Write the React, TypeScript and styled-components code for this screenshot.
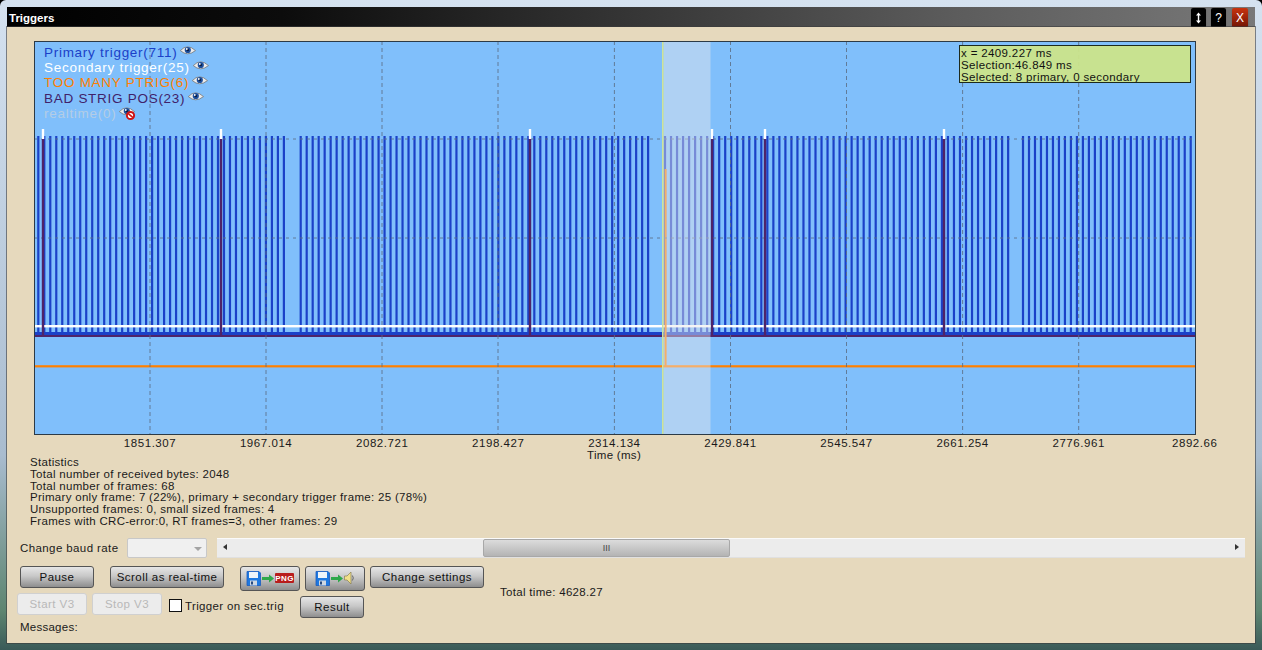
import React from 'react';
import styled, { createGlobalStyle } from 'styled-components';

const GRID_X = [150, 266, 382, 498, 614.4, 730.5, 846.5, 962.6, 1078.7];
const TICKS = ['1851.307', '1967.014', '2082.721', '2198.427', '2314.134', '2429.841', '2545.547', '2661.254', '2776.961', '2892.66'];
const MARKERS = [43, 221, 530, 712, 765, 944];

const makeBars = (start: number, count: number, step: number) =>
  Array.from({ length: count }, (_, i) => start + i * step);

const BARS = [
  ...makeBars(38.3, 42, 5.99),
  ...makeBars(300.7, 59, 5.99),
  ...makeBars(665, 58, 6.02),
  ...makeBars(1023, 29, 5.99),
];

const STATS = [
  'Statistics',
  'Total number of received bytes: 2048',
  'Total number of frames: 68',
  'Primary only frame: 7 (22%), primary + secondary trigger frame: 25 (78%)',
  'Unsupported frames: 0, small sized frames: 4',
  'Frames with CRC-error:0, RT frames=3, other frames: 29',
];

const LEGEND = [
  { label: 'Primary trigger(711)', color: '#1b41c8' },
  { label: 'Secondary trigger(25)', color: '#ffffff' },
  { label: 'TOO MANY PTRIG(6)', color: '#ff8000' },
  { label: 'BAD STRIG POS(23)', color: '#40226a' },
  { label: 'realtime(0)', color: '#b4cde6', off: true },
];

const Eye = ({ off }: { off?: boolean }) => (
  <EyeIcon width="16" height="12" viewBox="0 0 16 12">
    <path d="M0.3 4.6 Q7.5 -3 15.5 4.6 Q7.5 11 0.3 4.6Z" fill="#ececec" stroke="#777" strokeWidth="0.8" />
    <circle cx="7.8" cy="4" r="3.1" fill="#1d4f9c" />
    <circle cx="7.8" cy="4" r="1.2" fill="#0a1c40" />
    <circle cx="6.8" cy="3" r="0.9" fill="#fff" />
    {off && (
      <g>
        <circle cx="11.5" cy="8.5" r="3.6" fill="#fff" stroke="#d01414" strokeWidth="2" />
        <line x1="9" y1="6.4" x2="14" y2="10.6" stroke="#d01414" strokeWidth="1.6" />
      </g>
    )}
  </EyeIcon>
);

const ResizeArrow = () => (
  <svg width="7" height="12" viewBox="0 0 7 12">
    <path d="M3.5 0.5L6 3.5H4.2V8.5H6L3.5 11.5L1 8.5H2.8V3.5H1Z" fill="#fff" />
  </svg>
);

const Floppy = () => (
  <svg width="15" height="15" viewBox="0 0 15 15">
    <path d="M1 0.5H13L14.5 2V14.5H1Z" fill="#1e78e0" stroke="#1a5cc0" strokeWidth="0.8" />
    <rect x="3" y="1" width="9" height="6" fill="#eef4fa" />
    <rect x="4" y="9.5" width="7" height="5" fill="#cfd8e2" />
    <rect x="5" y="10.5" width="2" height="3" fill="#274a80" />
  </svg>
);

const GreenArrow = () => (
  <svg width="12" height="9" viewBox="0 0 12 9">
    <path d="M0 3H7V0.5L12 4.5L7 8.5V6H0Z" fill="#2ea84a" />
  </svg>
);

const PngBadge = () => (
  <svg width="19" height="10" viewBox="0 0 19 10">
    <rect width="19" height="10" rx="1" fill="#b81c1c" />
    <text x="9.5" y="8" textAnchor="middle" fontFamily="'Liberation Sans', sans-serif" fontSize="8" fontWeight="700" fill="#fff">PNG</text>
  </svg>
);

const Speaker = () => (
  <svg width="11" height="14" viewBox="0 0 11 14">
    <path d="M0.5 5H3L7 1V13L3 9H0.5Z" fill="#f1e08a" stroke="#8a8050" strokeWidth="0.7" />
    <path d="M8.4 4.5Q10.2 7 8.4 9.5" fill="none" stroke="#666" strokeWidth="1" />
  </svg>
);

const Plot = () => (
  <PlotSvg viewBox="34 41 1162 394" preserveAspectRatio="none">
    {BARS.map((x) => (
      <rect key={x} x={x - 1.1} y={136} width={2.2} height={196} fill="#1b41c8" />
    ))}
    <rect x={34} y={325} width={1162} height={2.4} fill="#ffffff" />
    <rect x={34} y={332} width={1162} height={3} fill="#1b41c8" />
    <rect x={34} y={335} width={1162} height={2} fill="#4f2468" />
    <rect x={664.6} y={169} width={2} height={197} fill="#ff8000" />
    <rect x={34} y={365.2} width={1162} height={2.2} fill="#ff8000" />
    {GRID_X.map((x) => (
      <line key={x} x1={x} x2={x} y1={41} y2={435} stroke="#5c6f86" strokeOpacity="0.85" strokeWidth="1" strokeDasharray="4 3" />
    ))}
    {[139, 238].map((y) => (
      <line key={y} x1={34} x2={1196} y1={y} y2={y} stroke="#5c6f86" strokeOpacity="0.85" strokeWidth="1" strokeDasharray="3 4" />
    ))}
    {MARKERS.map((x) => (
      <g key={x}>
        <rect x={x - 1.2} y={139} width={2.4} height={197} fill="#4f2468" />
        <rect x={x - 1.2} y={129} width={2.4} height={10} fill="#ffffff" />
      </g>
    ))}
    <rect x={663.5} y={41} width={47} height={394} fill="#e8e7e9" fillOpacity="0.45" />
    <rect x={662} y={41} width={1.6} height={394} fill="#cfe39a" />
  </PlotSvg>
);

export default function App() {
  return (
    <>
      <GlobalStyle />
      <Frame>
        <TitleBar>
          <TitleText>Triggers</TitleText>
          <TitleButtons>
            <TitleButton><ResizeArrow /></TitleButton>
            <TitleButton>?</TitleButton>
            <CloseButton>X</CloseButton>
          </TitleButtons>
        </TitleBar>
        <Body>
          <PlotBox>
            <Plot />
            <Legend>
              {LEGEND.map((item) => (
                <LegendRow key={item.label} $color={item.color}>
                  {item.label}
                  <Eye off={item.off} />
                </LegendRow>
              ))}
            </Legend>
            <InfoBox>
              <div>x = 2409.227 ms</div>
              <div>Selection:46.849 ms</div>
              <div>Selected: 8 primary, 0 secondary</div>
            </InfoBox>
          </PlotBox>
          <TickRow>
            {TICKS.map((t) => (
              <Tick key={t}>{t}</Tick>
            ))}
          </TickRow>
          <AxisTitle>Time (ms)</AxisTitle>
          <Stats>
            {STATS.map((s) => (
              <div key={s}>{s}</div>
            ))}
          </Stats>
          <BaudRow>
            <BaudLabel>Change baud rate</BaudLabel>
            <BaudSelect>
              <SelectArrow />
            </BaudSelect>
            <ScrollTrack>
              <ScrollArrow $dir="left" />
              <ScrollThumb>
                <Grip>III</Grip>
              </ScrollThumb>
              <ScrollArrow $dir="right" />
            </ScrollTrack>
          </BaudRow>
          <ControlRow>
            <PauseButton>Pause</PauseButton>
            <ScrollButton>Scroll as real-time</ScrollButton>
            <IconButton>
              <Floppy />
              <GreenArrow />
              <PngBadge />
            </IconButton>
            <IconButton>
              <Floppy />
              <GreenArrow />
              <Speaker />
            </IconButton>
            <SettingsButton>Change settings</SettingsButton>
            <TotalTime>Total time: 4628.27</TotalTime>
          </ControlRow>
          <SecondRow>
            <DisabledButton disabled>Start V3</DisabledButton>
            <DisabledButton disabled>Stop V3</DisabledButton>
            <CheckLabel>
              <CheckBox />
              Trigger on sec.trig
            </CheckLabel>
            <ResultButton>Result</ResultButton>
          </SecondRow>
          <Messages>Messages:</Messages>
        </Body>
      </Frame>
    </>
  );
}

// ========== Styled Components ==========

const GlobalStyle = createGlobalStyle`
  html, body {
    margin: 0;
    padding: 0;
    background: #000;
    overflow: hidden;
  }
  * {
    box-sizing: border-box;
  }
`;

const Frame = styled.div`
  width: 1262px;
  height: 650px;
  padding: 7px;
  display: flex;
  flex-direction: column;
  background: linear-gradient(180deg, #d5e2f0 0%, #a9bccf 70%, #5d8570 94%, #3a5a58 100%);
  border-radius: 6px 6px 0 0;
  font-family: 'Liberation Sans', Arial, sans-serif;
`;

const TitleBar = styled.div`
  height: 20px;
  flex: none;
  display: flex;
  align-items: center;
  justify-content: space-between;
  background: linear-gradient(90deg, #000 0%, #0c0c0c 22%, #5c5c5c 76%, #787878 100%);
`;

const TitleText = styled.span`
  padding-left: 2px;
  padding-top: 2px;
  color: #fff;
  font-size: 11.5px;
  font-weight: 700;
`;

const TitleButtons = styled.div`
  display: flex;
  align-self: flex-start;
  gap: 5px;
  margin-top: 1px;
  padding-right: 7px;
`;

const TitleButton = styled.div`
  width: 15px;
  height: 20px;
  display: flex;
  align-items: center;
  justify-content: center;
  background: #000;
  border-radius: 2px;
  color: #fff;
  font-size: 12px;
  box-shadow: 0 1px 1px rgba(0, 0, 0, 0.5);
`;

const CloseButton = styled(TitleButton)`
  width: 16px;
  margin-left: 1px;
  background: linear-gradient(180deg, #c9340f 0%, #6e1404 100%);
`;

const Body = styled.div`
  flex: 1;
  display: flex;
  flex-direction: column;
  padding-top: 14px;
  background: #e6d9bd;
  color: #1a1a1a;
  font-size: 11.5px;
  box-shadow: 0 0 0 1px rgba(60, 60, 60, 0.6);
`;

const PlotBox = styled.div`
  position: relative;
  flex: none;
  width: 1162px;
  height: 394px;
  margin-left: 27px;
  background: #80bffb;
  outline: 1px solid #2c3a46;
  outline-offset: -1px;
`;

const PlotSvg = styled.svg`
  display: block;
  width: 100%;
  height: 100%;
`;

const Legend = styled.div`
  position: absolute;
  left: 10px;
  top: 4px;
  display: flex;
  flex-direction: column;
`;

const LegendRow = styled.div<{ $color: string }>`
  display: flex;
  align-items: flex-start;
  height: 15.2px;
  line-height: 15px;
  font-size: 13.5px;
  letter-spacing: 0.72px;
  color: ${(p) => p.$color};
  white-space: nowrap;
`;

const EyeIcon = styled.svg`
  margin-left: 3px;
  margin-top: 1px;
  overflow: visible;
`;

const InfoBox = styled.div`
  position: absolute;
  left: 925px;
  top: 4px;
  width: 232px;
  height: 38px;
  padding: 1px 0 0 1px;
  overflow: hidden;
  background: rgba(203, 228, 138, 0.95);
  border: 1px solid #1d2a1d;
  font-size: 11.5px;
  line-height: 12px;
  letter-spacing: 0.36px;
  color: #111;
`;

const TickRow = styled.div`
  display: flex;
  width: 1216px;
  height: 14px;
  padding-left: 85px;
  overflow: hidden;
`;

const Tick = styled.div`
  flex: none;
  width: 116.09px;
  padding-top: 2px;
  line-height: 12px;
  text-align: center;
  font-size: 11.5px;
  letter-spacing: 0.55px;
  white-space: nowrap;
`;

const AxisTitle = styled.div`
  width: 1216px;
  height: 8px;
  line-height: 12px;
  padding-left: 580px;
  font-size: 11.5px;
  letter-spacing: 0.3px;
`;

const Stats = styled.div`
  padding-left: 23px;
  font-size: 11.5px;
  line-height: 11.8px;
  letter-spacing: 0.3px;
`;

const BaudRow = styled.div`
  display: flex;
  align-items: center;
  height: 20px;
  margin-top: 10px;
  padding-left: 13px;
`;

const BaudLabel = styled.span`
  width: 107px;
  font-size: 11.5px;
  letter-spacing: 0.4px;
`;

const BaudSelect = styled.div`
  position: relative;
  width: 80px;
  height: 20px;
  margin-right: 10px;
  background: #f0f0f0;
  border: 1px solid #c8c8c8;
  border-radius: 2px;
`;

const SelectArrow = styled.div`
  position: absolute;
  right: 4px;
  top: 8px;
  border-left: 4px solid transparent;
  border-right: 4px solid transparent;
  border-top: 4px solid #a4a4a4;
`;

const ScrollTrack = styled.div`
  position: relative;
  width: 1028px;
  height: 20px;
  background: #ececec;
  border-top: 1px solid #fafafa;
  border-bottom: 1px solid #e0e0e0;
`;

const ScrollArrow = styled.div<{ $dir: 'left' | 'right' }>`
  position: absolute;
  top: 5px;
  ${(p) => (p.$dir === 'left' ? 'left: 6px;' : 'right: 6px;')}
  border-top: 3.5px solid transparent;
  border-bottom: 3.5px solid transparent;
  ${(p) => (p.$dir === 'left' ? 'border-right: 4px solid #333;' : 'border-left: 4px solid #333;')}
`;

const ScrollThumb = styled.div`
  position: absolute;
  left: 266px;
  top: 0;
  width: 247px;
  height: 18px;
  display: flex;
  align-items: center;
  justify-content: center;
  background: linear-gradient(180deg, #dcdcdc 0%, #b4b4b4 100%);
  border: 1px solid #a8a8a8;
  border-radius: 2px;
`;

const Grip = styled.span`
  font-size: 9px;
  color: #444;
`;

const ControlRow = styled.div`
  display: flex;
  align-items: flex-start;
  height: 27px;
  margin-top: 8px;
  padding-left: 13px;
`;

const Button = styled.button`
  height: 22px;
  padding: 0;
  background: linear-gradient(180deg, #e6e6e6 0%, #c8c8c8 45%, #8e8e8e 100%);
  border: 1px solid #555;
  border-radius: 3px;
  color: #111;
  font-family: inherit;
  font-size: 11.5px;
  letter-spacing: 0.45px;
`;

const PauseButton = styled(Button)`
  width: 74px;
  margin-right: 16px;
`;

const ScrollButton = styled(Button)`
  width: 114px;
  margin-right: 16px;
`;

const IconButton = styled(Button)`
  width: 60px;
  height: 25px;
  margin-right: 5px;
  display: flex;
  align-items: center;
  justify-content: center;
  gap: 1px;
`;

const SettingsButton = styled(Button)`
  width: 114px;
`;

const TotalTime = styled.span`
  margin-left: 16px;
  margin-top: 20px;
  font-size: 11.5px;
  letter-spacing: 0.3px;
`;

const SecondRow = styled.div`
  display: flex;
  align-items: flex-start;
  height: 25px;
  padding-left: 10px;
`;

const DisabledButton = styled(Button)`
  width: 70px;
  margin-right: 5px;
  background: #ececec;
  border-color: #d0d0d0;
  color: #b8b8b8;
`;

const CheckLabel = styled.label`
  display: flex;
  align-items: center;
  width: 131px;
  height: 22px;
  margin-left: 2px;
  margin-top: 2px;
  font-size: 11.5px;
  letter-spacing: 0.35px;
`;

const CheckBox = styled.span`
  flex: none;
  width: 13px;
  height: 13px;
  margin-right: 3px;
  background: #fff;
  border: 1px solid #111;
`;

const ResultButton = styled(Button)`
  width: 64px;
  margin-top: 3px;
`;

const Messages = styled.div`
  margin-top: 3px;
  padding-left: 13px;
  font-size: 11.5px;
  letter-spacing: 0.25px;
`;
